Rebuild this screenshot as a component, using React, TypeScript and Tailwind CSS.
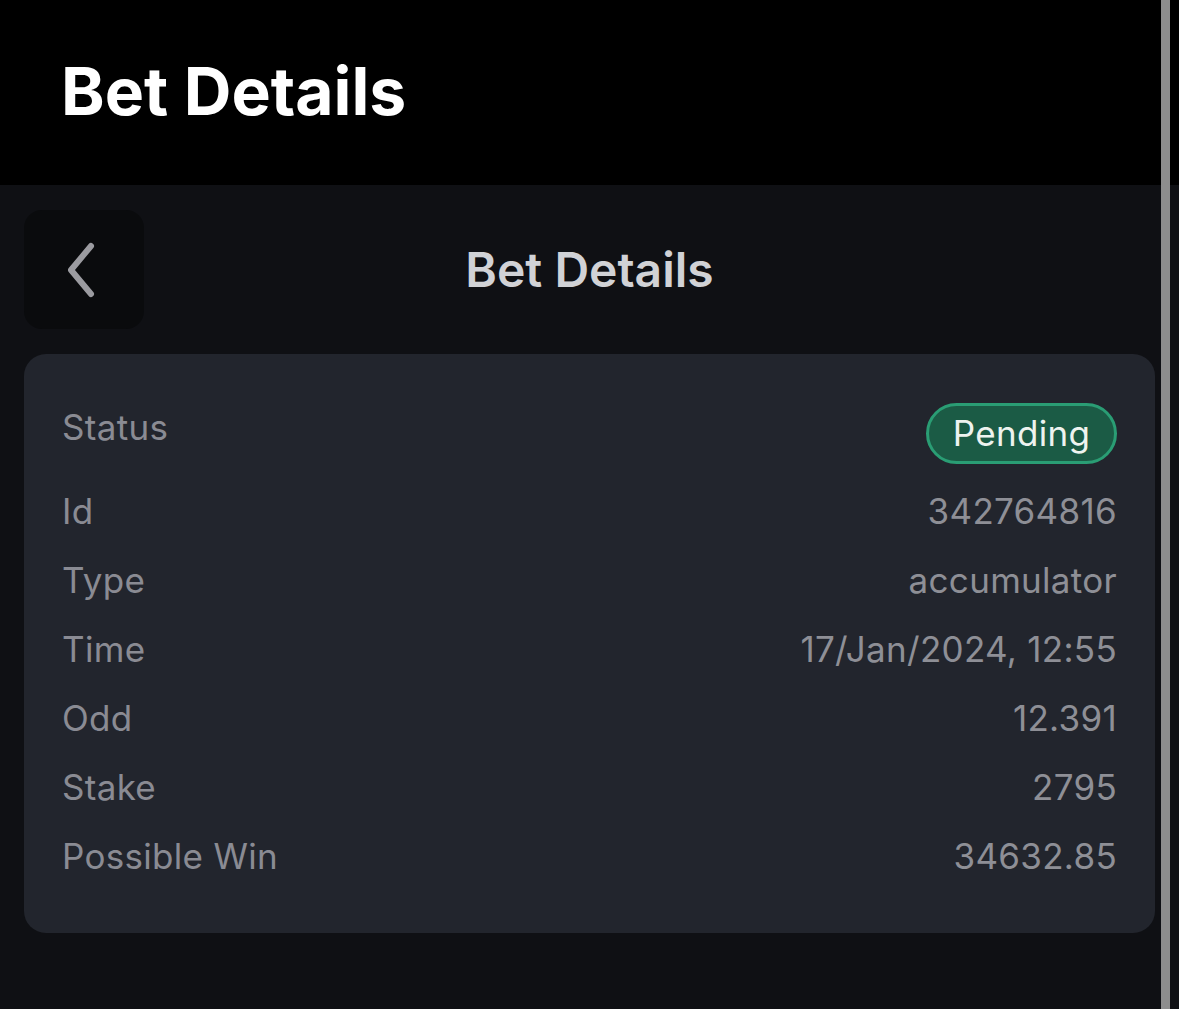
import React from 'react';

const rows: { label: string; value: string }[] = [
  { label: 'Id', value: '342764816' },
  { label: 'Type', value: 'accumulator' },
  { label: 'Time', value: '17/Jan/2024, 12:55' },
  { label: 'Odd', value: '12.391' },
  { label: 'Stake', value: '2795' },
  { label: 'Possible Win', value: '34632.85' },
];

export default function App(): JSX.Element {
  return (
    <div
      className="relative w-full h-[1009px] overflow-hidden bg-[#0f1014]"
      style={{ fontFamily: 'Inter, "Noto Sans", sans-serif' }}
    >
      {/* Top bar */}
      <div className="h-[185px] bg-black flex items-center pl-[61px] pb-[3px]">
        <h1 className="text-[66px] leading-none font-bold text-white">Bet Details</h1>
      </div>

      {/* Sub header */}
      <div className="relative flex items-center h-[119px] mt-[25px] px-[24px]">
        <button
          type="button"
          className="w-[120px] h-[119px] rounded-[18px] bg-[#0a0b0d] flex items-center justify-center"
        >
          <svg width="40" height="60" viewBox="0 0 40 60" fill="none" aria-hidden="true">
            <path
              d="M27 6 L7 30 L27 54"
              stroke="#9b9ba0"
              strokeWidth="6"
              strokeLinecap="round"
              strokeLinejoin="round"
            />
          </svg>
        </button>
        <h2 className="absolute left-0 right-0 text-center text-[48px] leading-none font-semibold text-[#d1d2d6] pointer-events-none">
          Bet Details
        </h2>
      </div>

      {/* Details card */}
      <div className="mx-[24px] mt-[25px] rounded-[22px] bg-[#22252d] px-[38px] pt-[49px] pb-[42px]">
        <div className="flex justify-between items-start">
          <span className="text-[35px] leading-[48px] tracking-[0.3px] text-[#8a8b93]">Status</span>
          <span className="w-[191px] h-[61px] rounded-full border-[3px] border-[#2a9d74] bg-[#1b5b45] text-[#eef3ef] text-[35px] tracking-[0.3px] flex items-center justify-center">
            Pending
          </span>
        </div>
        <div className="mt-[13px]">
          {rows.map((r) => (
            <div key={r.label} className="flex justify-between items-center h-[69px]">
              <span className="text-[35px] tracking-[0.3px] text-[#8a8b93]">{r.label}</span>
              <span className="text-[35px] tracking-[0.3px] text-[#8e8f96]">{r.value}</span>
            </div>
          ))}
        </div>
      </div>

      {/* Scrollbar track */}
      <div className="absolute top-0 bottom-0 left-[1161px] w-[9px] bg-[#8d8d8d]" />
    </div>
  );
}
